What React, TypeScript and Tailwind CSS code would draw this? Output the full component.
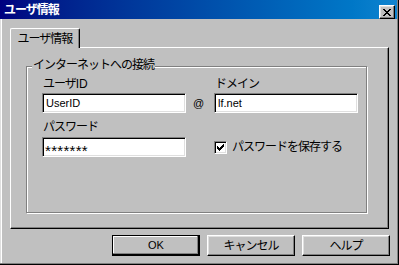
import React from 'react';

const raised =
  'border border-t-white border-l-white border-r-black border-b-black shadow-[inset_-1px_-1px_0_#808080,inset_1px_1px_0_#dfdfdf]';
const sunken =
  'border border-t-[#808080] border-l-[#808080] border-r-white border-b-white shadow-[inset_1px_1px_0_#000,inset_-1px_-1px_0_#dfdfdf]';
const jp = 'text-[12px] tracking-[-1px]';

const closeRows = [
  'XX....XX',
  '.XX..XX.',
  '..XXXX..',
  '...XX...',
  '..XXXX..',
  '.XX..XX.',
  'XX....XX',
];

const checkRows = [
  '......X',
  '.....XX',
  'X...XXX',
  'XX.XXX.',
  'XXXXX..',
  '.XXX...',
  '..X....',
];

// pixel glyph, drawn like the old bitmap ones
const PixelIcon: React.FC<{ rows: string[] }> = ({ rows }) => (
  <svg width={rows[0].length} height={rows.length} shapeRendering="crispEdges">
    {rows.map((row, y) =>
      row.split('').map((c, x) => (c === 'X' ? <rect key={`${x}-${y}`} x={x} y={y} width={1} height={1} fill="#000" /> : null))
    )}
  </svg>
);

const TextBox: React.FC<{ value: string; password?: boolean }> = ({ value, password }) => (
  <div className={`w-[144px] h-[20px] bg-white flex items-center pl-[2px] ${sunken}`}>
    {password ? (
      <span className="text-[15px] tracking-[0.3px] leading-none pt-[6px]">{value}</span>
    ) : (
      <span className="text-[11px] leading-none pl-px">{value}</span>
    )}
  </div>
);

const Button: React.FC<{ label: string; isDefault?: boolean; latin?: boolean }> = ({ label, isDefault, latin }) => (
  <button
    className={`w-[88px] h-[21px] bg-[#c0c0c0] flex items-center justify-center ${
      isDefault
        ? 'border border-black shadow-[inset_-1px_-1px_0_#000,inset_-2px_-2px_0_#808080,inset_1px_1px_0_#fff]'
        : raised
    }`}
  >
    <span className={latin ? 'text-[11px]' : jp}>{label}</span>
  </button>
);

export default function App() {
  return (
    <div className="w-[399px] h-[265px] bg-[#c0c0c0] border-r border-b border-black text-black font-['Liberation_Sans','Noto_Sans_CJK_JP',sans-serif] overflow-hidden">
      <div className="h-full flex flex-col border-r border-b border-[#808080]">
        {/* title bar */}
        <div className="flex h-[19px] bg-linear-to-r from-[#000080] to-[#1084d0] pl-[4px] pr-[2px]">
          <span className={`flex-1 font-bold text-white leading-[19px] pt-px ${jp}`}>ユーザ情報</span>
          <button className={`self-end w-[16px] h-[14px] bg-[#c0c0c0] flex items-center justify-center ${raised}`}>
            <PixelIcon rows={closeRows} />
          </button>
        </div>

        <div className="flex-1 flex flex-col border-l border-l-[#dfdfdf] shadow-[inset_1px_0_0_#fff] pl-[9px] pt-[9px] pr-[7px]">
          {/* tab */}
          <div className="flex">
            <div
              className={`relative z-10 -mb-px w-[70px] h-[20px] bg-[#c0c0c0] border-l border-t border-r border-l-white border-t-white border-r-black rounded-t-[2px] shadow-[inset_-1px_0_0_#808080] flex items-center justify-center ${jp}`}
            >
              ユーザ情報
            </div>
          </div>

          {/* tab page */}
          <div className="w-[379px] h-[182px] border border-t-white border-l-white border-r-black border-b-black shadow-[inset_-1px_-1px_0_#808080]">
            <div className="relative ml-[15px] mt-[18px] w-[341px] h-[147px] border border-[#808080] shadow-[inset_1px_1px_0_#fff,1px_1px_0_#fff]">
              <span className={`absolute left-[5px] top-[-9px] bg-[#c0c0c0] px-px leading-[14px] ${jp}`}>インターネットへの接続</span>

              <div className="ml-[15px] mt-[10px] flex flex-col">
                <div className={`flex h-[14px] leading-[14px] ${jp}`}>
                  <span className="w-[144px] pl-px">
                    ユーザ<span className="tracking-normal">ID</span>
                  </span>
                  <span className="w-[28px]" />
                  <span className="pl-px">ドメイン</span>
                </div>

                <div className="mt-[2px] flex items-center">
                  <TextBox value="UserID" />
                  <span className="w-[28px] pl-[7px] text-[11px] leading-none">@</span>
                  <TextBox value="lf.net" />
                </div>

                <div className={`mt-[7px] h-[14px] leading-[14px] pl-px ${jp}`}>パスワード</div>

                <div className="mt-[3px] flex items-center">
                  <TextBox value="*******" password />
                  <span className="w-[28px]" />
                  <div className={`w-[13px] h-[13px] bg-white flex items-center justify-center ${sunken}`}>
                    <PixelIcon rows={checkRows} />
                  </div>
                  <span className={`ml-[5px] leading-[14px] ${jp}`}>パスワードを保存する</span>
                </div>
              </div>
            </div>
          </div>

          {/* dialog buttons */}
          <div className="mt-[6px] flex justify-end gap-[7px]">
            <Button label="OK" isDefault latin />
            <Button label="キャンセル" />
            <Button label="ヘルプ" />
          </div>
        </div>
      </div>
    </div>
  );
}
